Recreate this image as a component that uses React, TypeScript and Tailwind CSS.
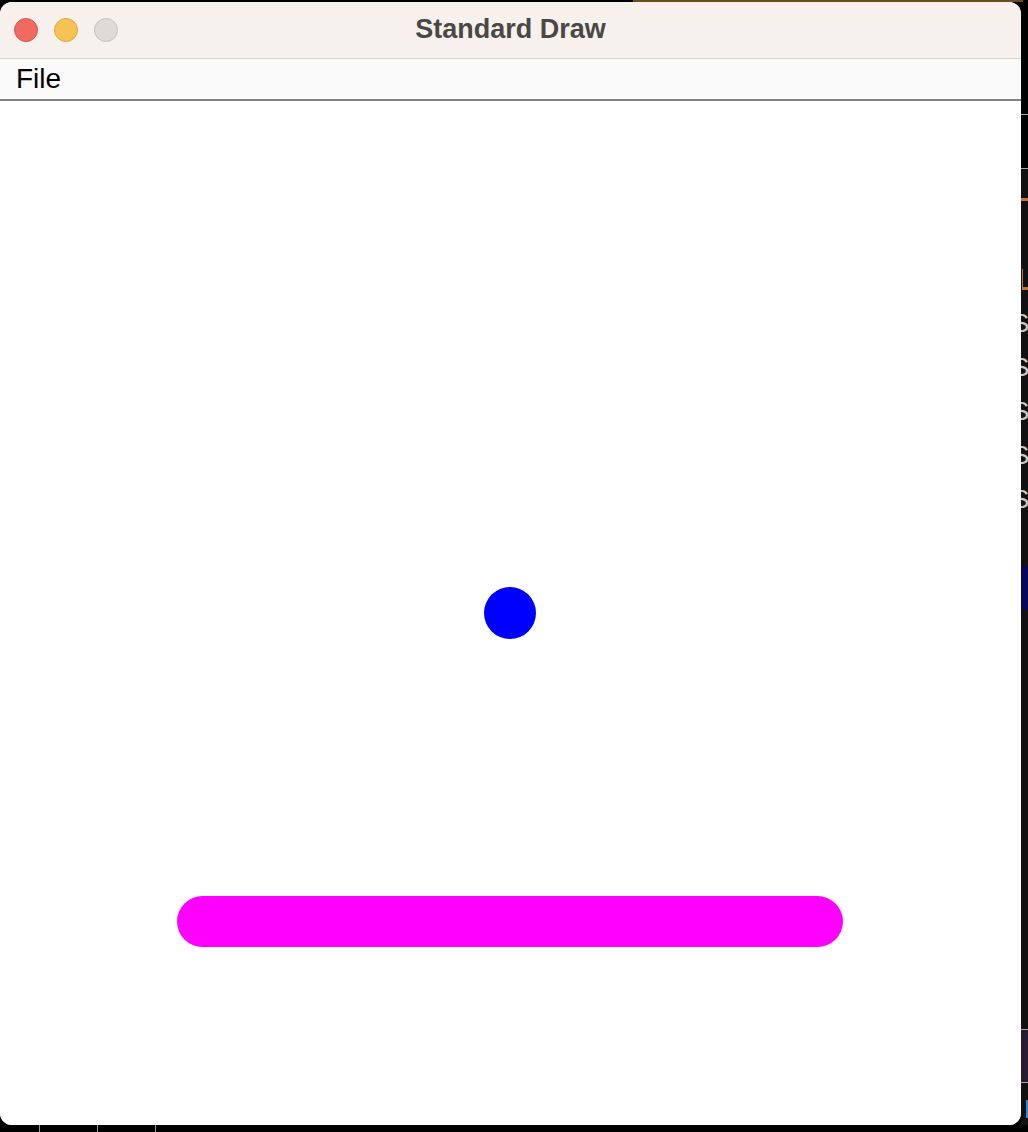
import React from "react";

const sans = '"Liberation Sans", Arial, sans-serif';

// the sliver of other windows showing to the right of Standard Draw
function RightStrip() {
  return (
    <div className="flex w-[7px] shrink-0 flex-col overflow-hidden bg-[#111111]">
      <div className="h-[112px] shrink-0 bg-black" />
      <div className="h-px shrink-0 bg-[#a8a8a8]" />
      <div className="h-[53px] shrink-0 bg-black" />
      <div className="h-px shrink-0 bg-[#a8a8a8]" />
      <div className="mt-[29px] h-[3px] shrink-0 bg-[#c87437]" />
      <div className="ml-px mt-[68px] h-[18px] w-px shrink-0 bg-[#c87437]" />
      <div className="ml-px h-[3px] shrink-0 bg-[#c87437]" />
      <div className="mt-[20px] flex shrink-0 flex-col gap-[18px]">
        {[0, 1, 2, 3, 4].map((i) => (
          <span
            key={i}
            className="-ml-[9px] block text-[26px] leading-[26px] text-[#c8c8c8]"
            style={{ fontFamily: sans }}
          >
            S
          </span>
        ))}
      </div>
      <div className="mt-[54px] h-[44px] shrink-0 bg-[#05055c]" />
      <div className="mt-[419px] h-px shrink-0 bg-[#a8a8a8]" />
      <div className="h-[52px] shrink-0 bg-[#261b33]" />
      <div className="h-px shrink-0 bg-[#a8a8a8]" />
      <div className="ml-[5px] mt-[17px] h-[18px] w-[2px] shrink-0 bg-[#2a8ad8]" />
    </div>
  );
}

export default function App() {
  return (
    <div className="flex h-[1132px] w-[1028px] flex-col overflow-hidden bg-black" style={{ fontFamily: sans }}>
      <div className="flex h-[2px] shrink-0 pl-[633px]">
        <div className="w-[390px] bg-[#6b4a22]" />
      </div>

      <div className="flex h-[1123px] shrink-0">
        {/* window */}
        <div className="flex w-[1021px] shrink-0 flex-col overflow-hidden rounded-[12px] bg-white">
          <div className="relative flex h-[57px] shrink-0 items-center border-b border-[#d6d2ce] bg-[#f6f1ed] pl-[14px]">
            <div className="flex gap-[16px]">
              <span className="h-[24px] w-[24px] rounded-full border border-[#d9584d] bg-[#ef6b5f]" />
              <span className="h-[24px] w-[24px] rounded-full border border-[#dba740] bg-[#f5c253]" />
              <span className="h-[24px] w-[24px] rounded-full border border-[#c6c1bd] bg-[#dedad6]" />
            </div>
            <div className="absolute inset-x-0 top-0 flex h-[54px] items-center justify-center">
              <span className="text-[27px] font-bold text-[#4a4745]">Standard Draw</span>
            </div>
          </div>

          <div className="flex h-[42px] shrink-0 items-center border-b-2 border-[#838383] bg-[#fafafa] pl-[16px]">
            <span className="text-[28px] leading-none text-black">File</span>
          </div>

          <div className="flex-1 bg-white">
            <svg width="1021" height="1024" viewBox="0 0 1021 1024">
              <circle cx="510" cy="512" r="26" fill="#0000ff" />
              <rect x="177" y="795" width="666" height="51" rx="25.5" fill="#ff00ff" />
            </svg>
          </div>
        </div>

        <RightStrip />
      </div>

      <div className="flex h-[7px] shrink-0 gap-[57px] pl-[39px]">
        <div className="w-px bg-[#9a9a9a]" />
        <div className="w-px bg-[#9a9a9a]" />
        <div className="w-px bg-[#9a9a9a]" />
      </div>
    </div>
  );
}
